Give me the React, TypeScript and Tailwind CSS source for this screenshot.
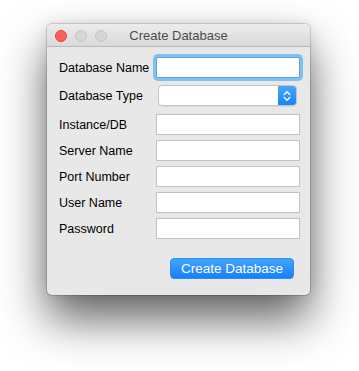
import React from "react";

const fields = ["Instance/DB", "Server Name", "Port Number", "User Name", "Password"];

const Chevrons = () => (
  <svg width="8" height="12" viewBox="0 0 8 12" fill="none">
    <path d="M1.2 4.5 L4 1.7 L6.8 4.5" stroke="white" strokeWidth="1.4" strokeLinecap="round" strokeLinejoin="round" />
    <path d="M1.2 7.5 L4 10.3 L6.8 7.5" stroke="white" strokeWidth="1.4" strokeLinecap="round" strokeLinejoin="round" />
  </svg>
);

const App = () => {
  return (
    <div
      className="w-[359px] h-[371px] bg-white pl-[47px] pt-[24px]"
      style={{ fontFamily: '"Liberation Sans", Arial, sans-serif' }}
    >
      <div className="w-[263px] h-[271px] rounded-[5px] bg-[#e8e8e8] flex flex-col overflow-hidden shadow-[0_0_0_1px_rgba(0,0,0,0.14),0_24px_46px_rgba(0,0,0,0.62),0_0_14px_rgba(0,0,0,0.1)]">
        {/* title bar */}
        <div className="relative h-[23px] shrink-0 flex items-center bg-gradient-to-b from-[#ececec] to-[#d9d9d9] border-b border-[#b9b9b9]">
          <div className="flex gap-[8px] pl-[8px] mt-[1px]">
            <span className="w-[12px] h-[12px] rounded-full bg-[#fc605c] border border-[#e0443e]" />
            <span className="w-[12px] h-[12px] rounded-full bg-[#d6d6d6] border border-[#c3c3c3]" />
            <span className="w-[12px] h-[12px] rounded-full bg-[#d6d6d6] border border-[#c3c3c3]" />
          </div>
          <div className="absolute inset-0 pt-[2px] flex items-center justify-center text-[13px] text-[#4d4d4d] pointer-events-none">
            Create Database
          </div>
        </div>

        {/* body */}
        <div className="flex flex-col pl-[12px] pr-[10px] text-[12.5px] text-black">
          <div className="mt-[10px] flex items-center h-[21px]">
            <label className="w-[97px] pt-[2px]">Database Name</label>
            <div className="flex-1 h-[21px] bg-white border border-[#5aa3e0] shadow-[0_0_0_3px_#7fc1f2] rounded-[2px]" />
          </div>
          <div className="mt-[7px] flex items-center h-[21px]">
            <label className="w-[99px] pt-[2px]">Database Type</label>
            <div className="w-[139px] h-[21px] flex rounded-[4px] bg-white border border-[#c4c4c4] overflow-hidden shadow-[0_1px_0_rgba(0,0,0,0.06)]">
              <div className="flex-1" />
              <div className="w-[18px] flex items-center justify-center bg-gradient-to-b from-[#47a7fb] to-[#1a84fb]">
                <Chevrons />
              </div>
            </div>
          </div>
          {fields.map((f, i) => (
            <div key={f} className={`${i === 0 ? "mt-[8px]" : "mt-[5px]"} flex items-center h-[21px]`}>
              <label className="w-[97px] pt-[2px]">{f}</label>
              <div className="flex-1 h-[21px] bg-white border border-[#c2c2c2]" />
            </div>
          ))}
          <div className="mt-[19px] flex justify-end pr-[6px]">
            <button className="w-[124px] h-[21px] rounded-[4px] bg-gradient-to-b from-[#40a4fc] to-[#1680fa] border border-[#2a8cf5] text-white text-[13.5px] leading-none pt-[1px]">
              Create Database
            </button>
          </div>
        </div>
      </div>
    </div>
  );
};

export default App;
